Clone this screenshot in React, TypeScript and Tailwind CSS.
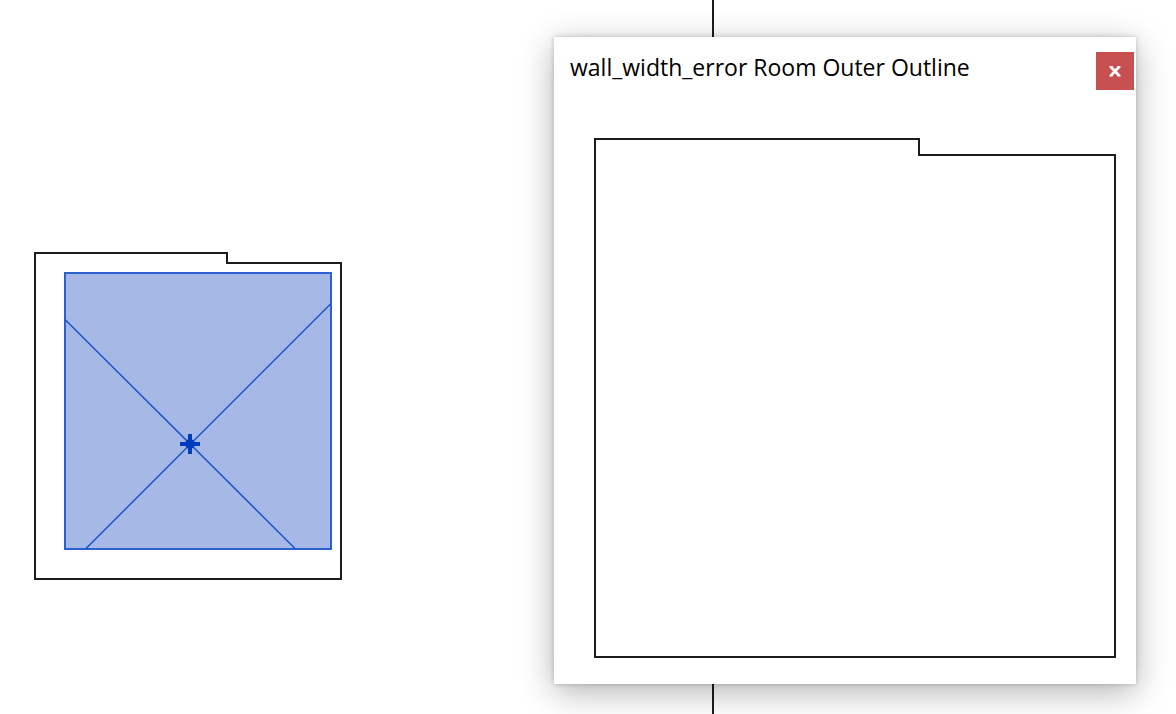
function RoomPlan() {
  return (
    <svg
      className="absolute left-[34px] top-[252px]"
      width="308"
      height="328"
      viewBox="34 252 308 328"
      fill="none"
      role="img"
      aria-label="Room with wall outline"
    >
      <path d="M35 253H227V263H341V579H35Z" stroke="#1c1c1c" strokeWidth="2" />
      <rect x="65" y="273" width="266" height="276" fill="#a6b8e6" stroke="#2e61d0" strokeWidth="2" />
      <path d="M65 319.5L295.5 549M331 303.5L85.5 549" stroke="#1f54cc" strokeWidth="1.5" />
      <path d="M190 434V454M180 444H200" stroke="#003cbe" strokeWidth="4" />
      <circle cx="190" cy="444" r="5" fill="#003cbe" />
    </svg>
  );
}

function OutlineWindow() {
  return (
    <section
      role="dialog"
      aria-labelledby="outline-title"
      className="absolute left-[554px] top-[37px] w-[582px] bg-white pb-[26px] shadow-[0_8px_32px_rgba(0,0,0,0.3),0_0_5px_rgba(0,0,0,0.2)]"
    >
      <header className="flex h-[101px] items-start justify-between pl-4 pr-0.5 pt-[15px]">
        <h1
          id="outline-title"
          className="whitespace-nowrap font-['Open_Sans','Noto_Sans',sans-serif] text-[23px] leading-[30px] text-black"
        >
          wall_width_error Room Outer Outline
        </h1>
        <button
          type="button"
          aria-label="Close"
          className="flex h-[38px] w-[38px] items-center justify-center bg-[#c75050] text-white"
        >
          <svg width="12" height="12" viewBox="0 0 12 12" fill="none" stroke="currentColor" strokeWidth="2.8">
            <path d="M2 2L10 10.5M10 2L2 10.5" />
            <path d="M0.5 1.8H3.5M8.5 1.8H11.5M0.5 10.6H3.5M8.5 10.6H11.5" strokeWidth="1.8" />
          </svg>
        </button>
      </header>
      <svg
        className="ml-10 block"
        width="522"
        height="520"
        viewBox="594 138 522 520"
        fill="none"
        role="img"
        aria-label="Room outer outline"
      >
        <path d="M595 139H919V155H1115V657H595Z" stroke="#1c1c1c" strokeWidth="2" />
      </svg>
    </section>
  );
}

export default function App() {
  return (
    <main className="relative min-h-screen overflow-hidden bg-white">
      <div className="absolute inset-y-0 left-[712px] w-0.5 bg-[#1c1c1c]" />
      <RoomPlan />
      <OutlineWindow />
    </main>
  );
}
